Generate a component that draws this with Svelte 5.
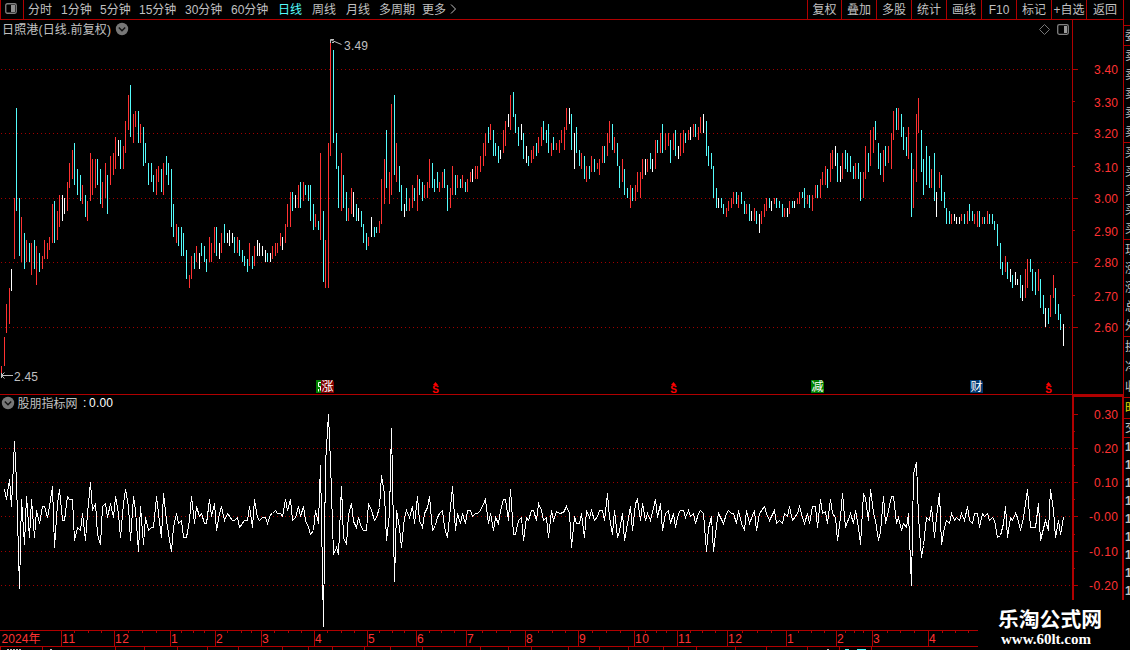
<script>
  const periods = [
    { label: '分时', width: 33 },
    { label: '1分钟', width: 39 },
    { label: '5分钟', width: 39 },
    { label: '15分钟', width: 46 },
    { label: '30分钟', width: 46 },
    { label: '60分钟', width: 47 },
    { label: '日线', width: 34 },
    { label: '周线', width: 34 },
    { label: '月线', width: 33 },
    { label: '多周期', width: 43 },
    { label: '更多', width: 28 }
  ];
  let activePeriod = '日线';

  const actions = [
    { label: '复权', width: 34 },
    { label: '叠加', width: 35 },
    { label: '多股', width: 35 },
    { label: '统计', width: 35 },
    { label: '画线', width: 35 },
    { label: 'F10', width: 35 },
    { label: '标记', width: 35 },
    { label: '+自选', width: 35 },
    { label: '返回', width: 37 }
  ];

  const colors = { r: '#ff3232', c: '#54fcfc', w: '#ffffff' };

  // Each bar: colour, x, high, low (screen pixels)
  const bars = `
    r1,366,376 r4,337,366 r6,304,333 r9,288,324 w11,269,291 r14,198,259 c16,108,211 c19,198,256 r21,217,262 c24,233,269
    r26,240,262 c29,243,262 r31,243,275 c34,240,269 r36,246,285 c39,253,272 r42,256,269 r44,240,259 r47,243,259 r49,237,250
    r52,204,243 c54,201,243 r57,211,240 r59,195,227 w62,195,221 w64,198,214 r67,182,211 r69,163,188 r72,150,179 c74,143,185
    c77,169,195 c80,175,201 r82,185,204 c85,195,217 r87,201,221 r90,153,201 r92,159,195 r95,159,188 c97,159,185 c100,169,204
    r102,182,208 r105,163,198 c107,175,214 r110,156,185 r113,153,175 r115,137,169 w118,140,156 c120,140,169 r123,146,169 r125,121,153
    r128,95,130 c130,85,137 r133,114,143 r135,111,127 c138,111,143 r140,124,143 c143,127,166 c145,143,163 c148,163,185 c151,163,182
    c153,175,192 r156,169,195 r158,166,182 c161,169,192 r163,163,195 c166,156,175 c168,163,185 c171,169,227 c173,204,237 r176,224,243
    c178,227,246 c181,227,256 c183,233,256 c186,250,279 r189,275,288 r191,256,279 c194,253,269 r196,246,262 w199,253,269 c201,243,256
    c204,246,262 c206,259,272 r209,237,262 r211,243,262 r214,227,253 c216,227,256 w219,243,259 r221,233,253 c224,224,243 w227,233,243
    w229,230,246 w232,233,243 c234,237,253 r237,237,253 c239,240,256 c242,250,262 c244,256,266 c247,259,272 r249,243,266 c252,256,269
    r254,246,266 w257,240,256 w259,243,256 w262,246,256 w265,250,262 c267,253,262 w270,253,262 r272,246,259 r275,243,256 r277,243,253
    r280,233,246 w282,237,250 r285,224,243 r287,204,227 r290,192,227 c292,192,211 w295,195,208 r298,185,208 c300,182,208 r303,182,201
    c305,185,195 c308,185,201 c310,185,221 c313,204,230 r315,214,227 c318,221,230 r320,153,240 c323,211,282 r325,240,288 r328,143,288
    r330,43,156 c333,50,143 c336,133,169 c338,166,208 r341,153,211 c343,175,208 c346,192,221 r348,208,221 r351,188,214 w353,192,217
    c356,204,221 w358,208,221 c361,211,227 c363,224,243 c366,233,250 r368,237,246 w371,217,237 c374,227,237 c376,227,233 r379,221,233
    r381,179,224 r384,159,204 c386,130,188 r389,172,204 r391,104,195 c394,95,175 r396,143,182 c399,166,192 c401,185,211 w404,204,217
    c406,188,211 r409,198,211 r412,185,208 c414,188,201 r417,175,211 c419,179,195 c422,182,201 r424,185,198 r427,182,198 r429,159,188
    c432,163,188 c434,179,192 c437,172,188 r439,182,192 r442,172,188 c444,169,188 c447,185,211 r450,188,208 r452,166,195 c455,175,195
    r457,175,188 c460,179,188 r462,175,188 c465,182,192 r467,179,192 r470,172,182 w472,169,182 r475,166,179 r477,166,179 r480,156,172
    r483,143,166 r485,133,156 c488,127,143 r490,124,140 c493,130,156 c495,143,156 c498,146,163 w500,150,159 r503,130,153 r505,121,146
    w508,114,127 r510,95,130 c513,92,117 c515,114,133 c518,127,146 w521,124,140 c523,133,159 w526,146,163 c528,156,166 r531,150,163
    r533,146,159 c536,143,156 r538,137,153 r541,127,146 c543,121,140 c546,130,143 c548,124,153 r551,143,156 c553,137,150 r556,143,150
    r559,140,153 r561,130,143 r564,127,150 r566,108,130 w569,108,124 c571,114,150 w574,133,169 c576,127,153 c579,150,166 r581,153,169
    c584,156,179 r586,166,182 c589,166,179 r591,156,172 c594,159,172 r597,163,169 r599,159,175 r602,146,163 c604,146,163 r607,133,156
    r609,121,143 c612,124,150 r614,137,153 c617,143,166 c619,166,188 r622,159,182 c624,169,195 c627,188,198 r630,185,208 c632,188,201
    r635,185,201 r637,172,192 r640,172,198 r642,159,179 w645,159,175 r647,159,172 c650,153,169 w652,159,172 r655,140,169 c657,140,153
    r660,133,153 c662,124,153 r665,133,150 r668,133,146 c670,140,163 r673,133,150 c675,130,156 w678,146,159 r680,133,156 r683,130,153
    c685,133,143 r688,130,140 w690,127,140 r693,124,137 c695,124,137 r698,127,140 r700,117,133 w703,114,133 c706,121,156 c708,146,166
    c711,153,169 c713,166,198 c716,188,208 w718,198,208 c721,198,208 c723,204,214 r726,208,217 r728,201,211 r731,198,208 r733,192,204
    c736,192,204 r738,195,208 c741,192,204 c744,201,214 r746,204,214 c749,204,221 w751,211,221 r754,208,221 c756,211,224 w759,214,233
    r761,211,224 r764,204,217 r766,198,211 c769,198,208 w771,201,211 r774,198,204 c776,198,208 c779,201,208 c782,204,217 r784,208,217
    w787,208,217 r789,201,214 c792,201,208 w794,201,208 r797,198,204 r799,192,204 c802,192,198 c804,188,208 r807,195,204 c809,195,208
    r812,195,211 r815,185,198 c817,185,198 r820,179,198 r822,172,185 r825,166,185 c827,169,188 r830,153,182 r832,150,169 w835,146,166
    c837,153,182 w840,166,182 r842,153,179 c845,150,169 c847,153,172 c850,156,172 c853,166,179 r855,163,179 c858,163,179 c860,172,201
    r863,172,198 r865,146,179 c868,153,172 r870,130,166 r873,127,153 c875,121,140 c878,143,169 c880,153,175 r883,150,182 c885,146,166
    r888,146,163 r891,133,169 r893,111,140 c896,108,130 r898,108,130 c901,114,137 c903,127,150 c906,137,156 r908,127,159 c911,153,217
    r913,169,208 r916,114,182 r918,98,133 c921,130,172 c923,159,195 c926,146,185 c929,156,188 r931,169,188 c934,153,201 w936,192,217
    r939,172,188 c941,175,201 c944,192,208 c946,208,224 c949,211,224 r951,214,224 w954,214,221 w956,217,224 w959,217,224 r961,214,221
    c964,214,224 r967,211,224 c969,204,221 c972,211,221 r974,214,224 r977,211,227 c979,211,227 r982,217,224 c984,217,224 r987,211,224
    c989,214,224 c992,214,224 c994,221,230 c997,224,246 c1000,243,269 c1002,262,275 r1005,256,272 c1007,262,279 w1010,269,282 c1012,275,288
    w1015,272,285 w1017,279,285 c1020,275,298 w1022,285,301 r1025,269,298 r1027,259,288 c1030,259,272 c1032,269,291 c1035,272,295 r1038,269,291
    c1040,279,308 c1043,295,314 w1045,308,327 c1048,308,324 r1050,295,317 r1053,275,298 c1055,288,314 c1058,304,320 c1060,314,330 w1063,324,346
  `
    .trim()
    .split(/\s+/)
    .map((item) => {
      const [x, high, low] = item.slice(1).split(',').map(Number);
      return { color: colors[item[0]], x, high, low };
    });

  const indicator = `
    4,489 6,499 9,479 11,506 14,441 16,481 19,588 21,499 24,544 26,496 29,537 31,499 34,537 36,510 39,523 42,506 44,506 47,517
    49,506 52,486 54,547 57,503 59,489 62,520 64,520 67,496 69,499 72,499 74,540 77,527 80,530 82,513 85,540 87,513 90,482 92,510
    95,503 97,534 100,544 102,506 105,503 107,517 110,503 113,517 115,496 118,513 120,537 123,503 125,489 128,506 130,540 133,496
    135,510 138,551 140,506 143,544 145,517 148,530 151,527 153,527 156,496 158,513 161,537 163,493 166,520 168,533 171,551
    173,527 176,513 178,523 181,520 183,537 186,537 189,520 191,496 194,523 196,506 199,516 201,513 204,523 206,523 209,499
    211,516 214,503 216,530 219,513 221,506 224,520 227,513 232,520 234,520 237,517 239,527 244,520 247,520 249,506 252,527
    254,499 257,517 259,520 262,517 265,517 267,523 270,514 272,513 275,510 277,513 280,513 282,516 285,499 287,510 290,499
    292,520 295,517 298,506 300,516 303,506 305,520 308,527 310,534 313,530 315,510 318,523 320,465 323,626 325,463 328,414
    330,462 333,554 336,547 338,554 341,486 343,537 346,544 348,514 351,503 353,521 356,527 358,517 361,527 363,530 366,530
    368,503 371,510 374,520 376,517 379,507 381,475 384,493 386,540 389,513 391,428 394,581 396,510 399,527 401,547 404,517
    406,510 409,517 412,506 414,523 417,496 419,520 422,527 424,513 427,507 429,496 432,530 435,525 437,517 439,513 442,510
    444,527 447,537 449,517 452,486 455,530 457,513 460,523 462,513 465,523 467,510 470,510 472,516 475,513 477,513 480,510
    485,499 488,523 490,513 493,530 495,517 498,523 500,510 503,499 505,499 508,520 510,489 513,534 515,534 518,520 521,517
    523,540 526,517 528,520 531,510 533,510 536,520 538,503 541,510 543,520 546,517 548,537 551,510 553,520 556,511 559,513
    563,512 566,506 569,513 571,547 574,516 576,523 579,523 581,513 584,537 586,510 589,517 591,510 594,520 597,516 599,510
    602,510 604,520 607,493 609,517 612,534 614,510 617,537 619,531 622,513 624,540 627,523 630,506 632,530 635,503 637,499
    640,520 642,503 645,520 647,513 650,520 655,499 657,517 660,503 662,530 665,513 668,510 670,523 673,513 675,527 678,513
    680,510 683,510 685,517 688,510 690,516 693,513 695,523 698,513 700,510 703,513 706,551 708,528 711,516 713,551 716,525
    718,513 723,523 726,513 728,510 731,513 733,513 736,523 738,510 741,523 744,530 746,510 749,523 754,510 756,530 759,513
    764,506 766,513 769,520 774,510 776,523 779,520 782,523 784,513 787,516 789,506 792,520 797,513 799,506 802,517 804,523
    807,513 809,523 812,506 815,506 817,527 820,499 822,513 825,511 827,523 830,499 832,513 835,517 837,540 840,517 842,493
    845,527 850,513 853,523 855,510 858,527 860,544 863,493 865,498 868,520 870,489 873,512 875,520 878,540 880,531 883,496
    885,523 888,510 891,496 893,496 896,523 898,517 901,530 903,523 906,527 908,513 911,585 913,473 916,462 918,517 921,557
    923,545 926,517 929,520 931,506 934,537 936,517 939,493 941,544 944,527 946,520 949,523 951,513 954,520 956,517 959,520
    961,513 964,520 967,506 969,520 972,523 974,513 977,513 979,527 982,513 984,516 987,513 989,520 992,517 994,520 997,537
    1000,535 1003,523 1005,506 1007,537 1010,517 1012,520 1015,513 1017,517 1020,530 1023,517 1027,489 1030,527 1035,527
    1038,503 1040,540 1045,520 1048,530 1050,489 1053,510 1055,537 1058,520 1060,534 1063,517
  `.trim();

  const priceGrid = [69, 133, 198, 262, 327];
  const indicatorGrid = [448, 482, 516, 551, 585];

  const priceTicks = [
    { y: 69, text: '3.40', textY: 74 },
    { y: 101, text: '3.30', textY: 107 },
    { y: 133, text: '3.20', textY: 138 },
    { y: 166, text: '3.10', textY: 172 },
    { y: 198, text: '3.00', textY: 203 },
    { y: 230, text: '2.90', textY: 236 },
    { y: 262, text: '2.80', textY: 267 },
    { y: 295, text: '2.70', textY: 301 },
    { y: 327, text: '2.60', textY: 332 }
  ];

  const indicatorTicks = [
    { y: 414, text: '0.30' },
    { y: 448, text: '0.20' },
    { y: 482, text: '0.10' },
    { y: 516, text: '-0.00' },
    { y: 551, text: '-0.10' },
    { y: 585, text: '-0.20' }
  ];
  const indicatorMinor = [431, 465, 499, 534, 568];

  const months = [
    [61, '11'], [114, '12'], [170, '1'], [215, '2'], [261, '3'], [314, '4'],
    [367, '5'], [416, '6'], [466, '7'], [525, '8'], [578, '9'], [634, '10'],
    [677, '11'], [727, '12'], [786, '1'], [836, '2'], [872, '3'], [928, '4']
  ];
  const weekTicks = [
    74, 88, 101, 128, 142, 156, 181, 193, 204, 227, 241, 251, 274, 288, 301, 327, 341, 354,
    379, 392, 404, 429, 441, 454, 482, 496, 510, 538, 552, 565, 592, 606, 620, 645, 656, 666,
    690, 702, 715, 742, 757, 771, 798, 811, 824, 845, 854, 863, 887, 900, 914, 942, 955, 968
  ];
  const footerTicks = [
    0, 42, 115, 144, 177, 207, 238, 282, 308, 332, 364, 390, 422, 480, 508, 531, 568, 599,
    628, 663, 696, 735, 766, 807, 839, 871
  ];

  const dividends = [435, 673, 1048];

  // Quote panel, only its left edge is on screen
  const quoteGroups = [
    { height: 20, rows: ['委'] },
    { height: 97, rows: ['卖', '卖', '卖', '卖', '卖'] },
    { height: 97, rows: ['买', '买', '买', '买', '买'] },
    { height: 97, rows: ['现', '涨', '涨', '总', '外'] },
    { height: 61, rows: ['换', '净', '收'] },
    { height: 21, rows: ['时'], accent: true },
    { height: 19, rows: ['交'] }
  ];
</script>

<div class="terminal">
  <div class="workspace">
    <div class="toolbar">
      <div class="panel-toggle">
        <svg width="12" height="11" viewBox="0 0 12 11">
          <rect x="0.75" y="0.75" width="10.5" height="9.5" rx="1.5" fill="none" stroke="#808080" stroke-width="1.3" />
          <rect x="6" y="2" width="4" height="7" fill="#909090" />
        </svg>
      </div>
      <div class="periods">
        {#each periods as period}
          <span class="period" class:active={period.label === activePeriod} style="width: {period.width}px">{period.label}</span>
        {/each}
        <svg class="more" width="7" height="12" viewBox="0 0 7 12">
          <path d="M1 1.5 L5.5 6 L1 10.5" fill="none" stroke="#c0c0c0" />
        </svg>
      </div>
      <div class="actions">
        {#each actions as action}
          <span class="action" style="width: {action.width}px">{action.label}</span>
        {/each}
      </div>
    </div>

    <div class="pane price-pane">
      <svg width="1072" height="374" viewBox="0 20 1072 374">
        {#each priceGrid as y}
          <line class="grid" x1="1" x2="1071" y1={y + 0.5} y2={y + 0.5} />
        {/each}
        <text class="label" x="2" y="34" textLength="109">日照港(日线.前复权)</text>
        <circle cx="122" cy="29" r="6.2" fill="#777" />
        <path d="M118.8 27.6 L122 30.8 L125.2 27.6" fill="none" stroke="#111" stroke-width="1.4" />

        {#each bars as bar}
          <rect class="bar" x={bar.x} y={bar.high} width="1" height={bar.low - bar.high} fill={bar.color} />
        {/each}

        <path class="arrow" d="M330.5 43 V39.5 H334 M331 40 L341.5 44.5 M332 42.5 H334" />
        <text class="label" x="344" y="50" textLength="24">3.49</text>
        <path class="arrow" d="M1 375.5 H13 M1.5 373 V378 M4.5 372.5 L1.5 375.5 L4.5 378.5" />
        <text class="label" x="14" y="381" textLength="24">2.45</text>

        <path d="M1044.5 24.5 L1049.5 29.5 L1044.5 34.5 L1039.5 29.5 Z" fill="none" stroke="#777" />
        <rect x="1057.7" y="24.7" width="10.6" height="9.6" rx="1.5" fill="none" stroke="#808080" stroke-width="1.3" />
        <rect x="1064" y="26" width="3" height="7" fill="#999" />

        <rect x="316" y="380" width="6" height="13" fill="#008000" />
        <path d="M321.5 382.5 H318.5 V386.5 H320.5 V390.5 M318.5 389 V391.5" fill="none" stroke="#fff" />
        <path d="M321 380 H332 L334 382 V393 H321 Z" fill="#800000" />
        <text class="tag" x="321.5" y="391">涨</text>
        <path d="M811 380 H822 L824 382 V393 H811 Z" fill="#008000" />
        <text class="tag" x="811.5" y="391">减</text>
        <path d="M970 380 H981 L983 382 V393 H970 Z" fill="#003870" />
        <text class="tag" x="970.5" y="391">财</text>
        {#each dividends as x}
          <path d="M{x + 0.5} 382 L{x + 3} 385 H{x - 2} Z" fill="#ff0000" />
          <text class="dividend" x={x + 0.5} y="393">S</text>
        {/each}
      </svg>
      <svg class="axis" width="50" height="374" viewBox="1073 20 50 374">
        {#each priceTicks as tick, i}
          <line class="tick" x1="1073" x2={i % 2 ? 1075 : 1078} y1={tick.y + 0.5} y2={tick.y + 0.5} />
          <text x="1118" y={tick.textY} textLength="24">{tick.text}</text>
        {/each}
      </svg>
    </div>

    <div class="pane indicator-pane">
      <svg width="1072" height="235" viewBox="0 395 1072 235">
        {#each indicatorGrid as y}
          <line class="grid" x1="1" x2="1071" y1={y + 0.5} y2={y + 0.5} />
        {/each}
        <circle cx="8" cy="403" r="6.2" fill="#777" />
        <path d="M4.8 401.6 L8 404.8 L11.2 401.6" fill="none" stroke="#111" stroke-width="1.4" />
        <text class="label" x="17.5" y="408">股朋指标网</text>
        <text class="label value" x="83" y="407">:</text>
        <text class="label value" x="89" y="407" textLength="24">0.00</text>
        <polyline class="indicator" points={indicator} transform="translate(0.5 0.5)" />
      </svg>
      <svg class="axis boxed" width="48" height="203" viewBox="1074 397 48 203">
        {#each indicatorTicks as tick}
          <line class="tick" x1="1074" x2="1078" y1={tick.y + 0.5} y2={tick.y + 0.5} />
          <text x="1118" y={tick.y + 5} textLength={tick.text.length > 4 ? 29 : 24}>{tick.text}</text>
        {/each}
        {#each indicatorMinor as y}
          <line class="tick" x1="1074" x2="1075" y1={y + 0.5} y2={y + 0.5} />
        {/each}
      </svg>
    </div>

    <svg class="time-axis" width="978" height="20" viewBox="0 630 978 20">
      <path class="tick" d="M0 630.5 H978 M0 646.5 H978" />
      {#each months as [x, month]}
        <line class="tick" x1={x + 0.5} x2={x + 0.5} y1="630" y2="646" />
        <text class="month" x={x + 1} y="643">{month}</text>
      {/each}
      {#each weekTicks as x}
        <line class="tick" x1={x + 0.5} x2={x + 0.5} y1="631" y2="633" />
      {/each}
      {#each footerTicks as x}
        <line class="tick" x1={x + 0.5} x2={x + 0.5} y1="647" y2="650" />
      {/each}
      <text x="1.5" y="643" textLength="39">2024年</text>
      <path d="M7 649.5 H22 M50 649.5 H52 M827 649.5 H829" stroke="#c0c0c0" stroke-dasharray="2 1" />
      <path d="M845 649.5 H849 M857 649.5 H866" stroke="#54fcfc" />
    </svg>
  </div>

  <div class="quote">
    {#each quoteGroups as group}
      <div class="quote-group" class:accent={group.accent} style="height: {group.height}px">
        {#each group.rows as row}
          <span>{row}</span>
        {/each}
      </div>
    {/each}
    <div class="trades">
      {#each Array(9) as _}
        <span>1</span>
      {/each}
    </div>
  </div>

  <div class="watermark">
    <strong>乐淘公式网</strong>
    <span>www.60lt.com</span>
  </div>
</div>

<style>
  :global(body) {
    background: #000;
    overflow: hidden;
  }

  .terminal {
    position: relative;
    display: flex;
    width: 1130px;
    height: 650px;
    overflow: hidden;
    background: #000;
    color: #c0c0c0;
    font-family: 'Liberation Sans', 'Noto Sans CJK SC', sans-serif;
    font-size: 12px;
  }

  svg {
    display: block;
    flex: none;
  }

  .workspace {
    display: flex;
    flex-direction: column;
    width: 1123px;
    flex: none;
  }

  .toolbar {
    display: flex;
    box-sizing: border-box;
    height: 20px;
    border-bottom: 1px solid #b00000;
    line-height: 20px;
    white-space: nowrap;
  }

  .panel-toggle {
    display: flex;
    align-items: center;
    box-sizing: border-box;
    width: 24px;
    padding: 0 0 2px 4px;
    border: solid #b00000;
    border-width: 0 1px;
  }

  .periods {
    display: flex;
    flex: 1;
    padding-left: 4px;
  }

  .period {
    flex: none;
  }

  .period.active {
    color: #54fcfc;
  }

  .more {
    margin-top: 3px;
  }

  .actions {
    display: flex;
    height: 19px;
  }

  .action {
    box-sizing: border-box;
    border-left: 1px solid #b00000;
    text-align: center;
  }

  .pane {
    display: flex;
  }

  .price-pane {
    box-sizing: border-box;
    height: 375px;
    border-bottom: 1px solid #b00000;
  }

  .indicator-pane {
    height: 235px;
    align-items: flex-start;
  }

  .grid {
    stroke: #a00000;
    stroke-dasharray: 1 3;
    shape-rendering: crispEdges;
  }

  .bar {
    shape-rendering: crispEdges;
  }

  .label {
    fill: #c0c0c0;
  }

  .value {
    fill: #fff;
  }

  .arrow {
    fill: none;
    stroke: #c0c0c0;
  }

  .tag {
    fill: #fff;
  }

  .dividend {
    fill: #ff0000;
    font-size: 10px;
    font-weight: bold;
    text-anchor: middle;
  }

  .indicator {
    fill: none;
    stroke: #fff;
    stroke-width: 1;
    shape-rendering: crispEdges;
  }

  .axis {
    border-left: 1px solid #b00000;
  }

  .axis.boxed {
    border: solid #b00000;
    border-width: 2px 1px 0 2px;
  }

  .axis text {
    fill: #ff3232;
    text-anchor: end;
  }

  .tick {
    fill: none;
    stroke: #b00000;
    shape-rendering: crispEdges;
  }

  .time-axis text {
    fill: #ff3232;
  }

  .month {
    letter-spacing: 0.6px;
  }

  .quote {
    box-sizing: border-box;
    width: 7px;
    height: 600px;
    padding-top: 25px;
    border-left: 1px solid #b00000;
    overflow: hidden;
  }

  .quote-group {
    display: flex;
    flex-direction: column;
    justify-content: space-around;
    box-sizing: border-box;
    padding-left: 1px;
    border-top: 1px solid #b00000;
    line-height: 14px;
  }

  .accent {
    color: #e0e000;
  }

  .trades {
    border-top: 1px solid #b00000;
    font-weight: bold;
    line-height: 18px;
  }

  .trades span {
    display: block;
    padding-left: 1px;
  }

  .watermark {
    position: absolute;
    right: 0;
    bottom: 0;
    display: flex;
    flex-direction: column;
    box-sizing: border-box;
    width: 152px;
    height: 50px;
    padding: 6px 0 0 20px;
    background: #000;
    color: #fff;
  }

  .watermark strong {
    font: bold 20.8px/24px 'Noto Sans CJK SC', sans-serif;
  }

  .watermark span {
    padding-left: 3px;
    font: bold 15px/18px 'Liberation Serif', serif;
  }
</style>
